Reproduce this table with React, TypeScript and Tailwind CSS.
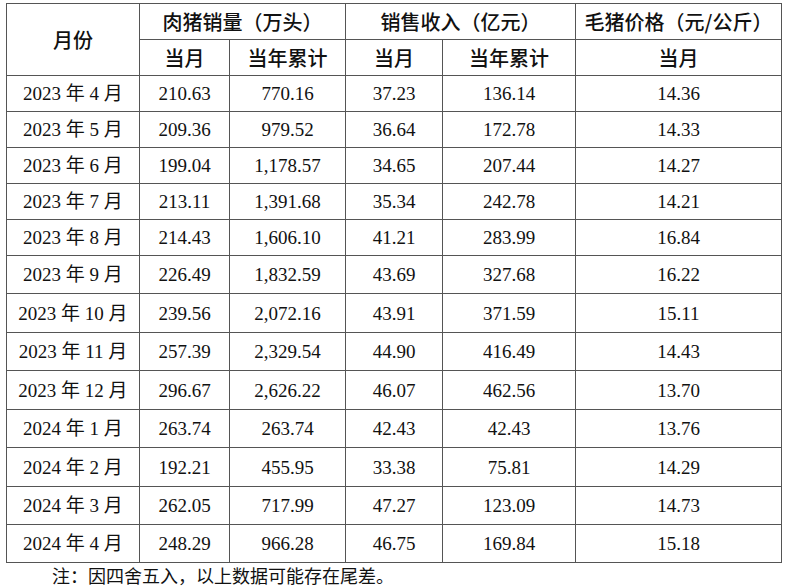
import React from "react"

const rows: { m: string; a: string; b: string; c: string; d: string; e: string; h: string }[] = [
  { m: "2023 年 4 月", a: "210.63", b: "770.16", c: "37.23", d: "136.14", e: "14.36", h: "h-[36px]" },
  { m: "2023 年 5 月", a: "209.36", b: "979.52", c: "36.64", d: "172.78", e: "14.33", h: "h-[36px]" },
  { m: "2023 年 6 月", a: "199.04", b: "1,178.57", c: "34.65", d: "207.44", e: "14.27", h: "h-[36px]" },
  { m: "2023 年 7 月", a: "213.11", b: "1,391.68", c: "35.34", d: "242.78", e: "14.21", h: "h-[36px]" },
  { m: "2023 年 8 月", a: "214.43", b: "1,606.10", c: "41.21", d: "283.99", e: "16.84", h: "h-[36px]" },
  { m: "2023 年 9 月", a: "226.49", b: "1,832.59", c: "43.69", d: "327.68", e: "16.22", h: "h-[38px]" },
  { m: "2023 年 10 月", a: "239.56", b: "2,072.16", c: "43.91", d: "371.59", e: "15.11", h: "h-[39px]" },
  { m: "2023 年 11 月", a: "257.39", b: "2,329.54", c: "44.90", d: "416.49", e: "14.43", h: "h-[38px]" },
  { m: "2023 年 12 月", a: "296.67", b: "2,626.22", c: "46.07", d: "462.56", e: "13.70", h: "h-[39px]" },
  { m: "2024 年 1 月", a: "263.74", b: "263.74", c: "42.43", d: "42.43", e: "13.76", h: "h-[38px]" },
  { m: "2024 年 2 月", a: "192.21", b: "455.95", c: "33.38", d: "75.81", e: "14.29", h: "h-[39px]" },
  { m: "2024 年 3 月", a: "262.05", b: "717.99", c: "47.27", d: "123.09", e: "14.73", h: "h-[38px]" },
  { m: "2024 年 4 月", a: "248.29", b: "966.28", c: "46.75", d: "169.84", e: "15.18", h: "h-[38px]" },
]

const th = "border border-[#555] p-0 text-center align-middle font-medium text-[20px]"
const td = "border border-[#555] p-0 text-center align-middle font-normal"

export default function App() {
  return (
    <div className="w-[791px] h-[586px] bg-white text-[#111] overflow-hidden">
      <table
        className="table-fixed border-collapse ml-[6px] mt-[3px] w-[775px] text-[19px] leading-none"
        style={{ fontFamily: '"Liberation Serif", "Noto Sans CJK SC", serif' }}
      >
        <colgroup>
          <col className="w-[133px]" />
          <col className="w-[90px]" />
          <col className="w-[116px]" />
          <col className="w-[97px]" />
          <col className="w-[133px]" />
          <col className="w-[206px]" />
        </colgroup>
        <thead className="font-['Noto_Sans_CJK_SC',sans-serif]">
          <tr className="h-[36px]">
            <th rowSpan={2} className={th}>月份</th>
            <th colSpan={2} className={th}>肉猪销量（万头）</th>
            <th colSpan={2} className={th}>销售收入（亿元）</th>
            <th className={th}>毛猪价格（元/公斤）</th>
          </tr>
          <tr className="h-[36px]">
            <th className={th}>当月</th>
            <th className={th}>当年累计</th>
            <th className={th}>当月</th>
            <th className={th}>当年累计</th>
            <th className={th}>当月</th>
          </tr>
        </thead>
        <tbody>
          {rows.map((r) => (
            <tr key={r.m} className={r.h}>
              <td className={td}>{r.m}</td>
              <td className={td}>{r.a}</td>
              <td className={td}>{r.b}</td>
              <td className={td}>{r.c}</td>
              <td className={td}>{r.d}</td>
              <td className={td}>{r.e}</td>
            </tr>
          ))}
        </tbody>
      </table>
      <p
        className="ml-[52px] mt-[3px] text-[18px] leading-[22px]"
        style={{ fontFamily: '"Liberation Serif", "Noto Sans CJK SC", serif' }}
      >
        注：因四舍五入，以上数据可能存在尾差。
      </p>
    </div>
  )
}
